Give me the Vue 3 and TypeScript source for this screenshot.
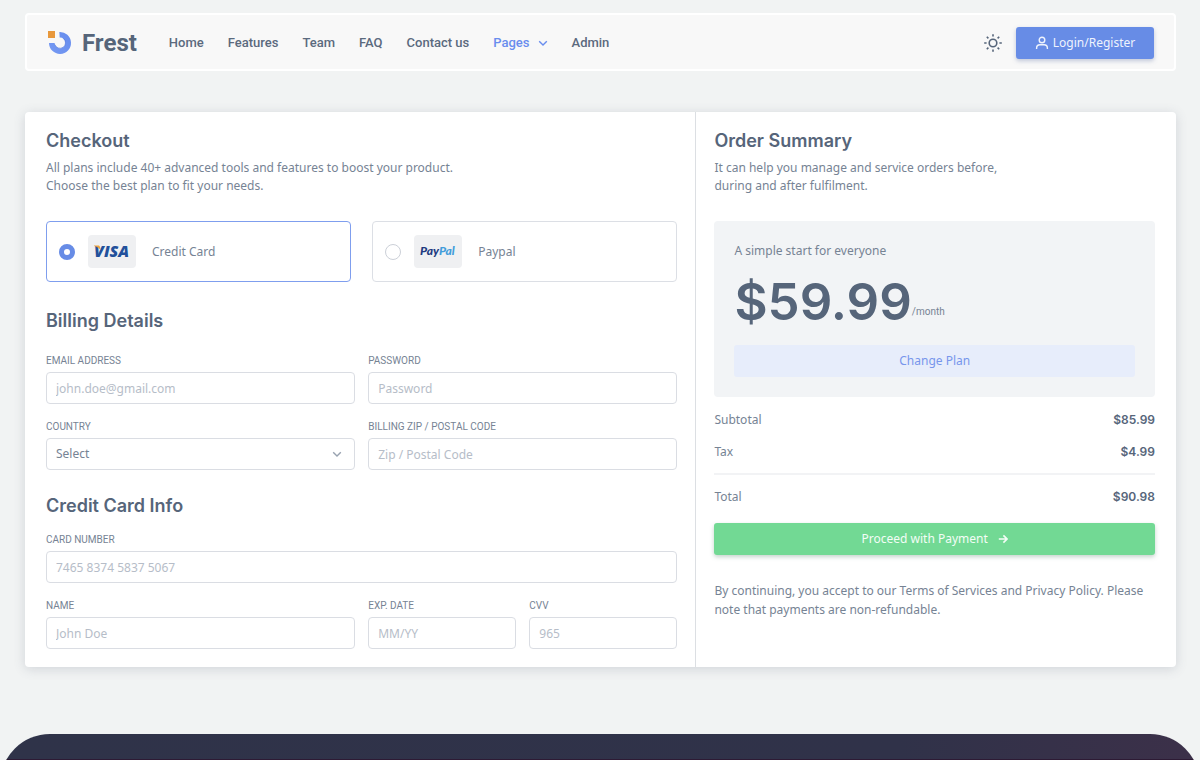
<script setup lang="ts">
import { ref } from 'vue'

interface NavItem {
  label: string
  active?: boolean
}

interface Field {
  id: string
  label: string
  placeholder: string
  type: string
  span: 1 | 2 | 4
}

const navItems: NavItem[] = [
  { label: 'Home' },
  { label: 'Features' },
  { label: 'Team' },
  { label: 'FAQ' },
  { label: 'Contact us' },
  { label: 'Pages', active: true },
  { label: 'Admin' },
]

const cardFields: Field[] = [
  { id: 'card-number', label: 'Card number', placeholder: '7465 8374 5837 5067', type: 'text', span: 4 },
  { id: 'card-name', label: 'Name', placeholder: 'John Doe', type: 'text', span: 2 },
  { id: 'card-expiry', label: 'Exp. date', placeholder: 'MM/YY', type: 'text', span: 1 },
  { id: 'card-cvv', label: 'CVV', placeholder: '965', type: 'text', span: 1 },
]

const method = ref<'card' | 'paypal'>('card')
const country = ref('')
</script>

<template>
  <div class="page">
    <header class="navbar">
      <a class="brand" href="#">
        <svg class="brand-mark" viewBox="0 0 24 24" aria-hidden="true">
          <defs>
            <linearGradient id="arc" x1="0" y1="1" x2="1" y2="0">
              <stop offset="0" stop-color="#7498f2" />
              <stop offset="1" stop-color="#688eee" />
            </linearGradient>
          </defs>
          <path d="M11.500 3.800A8.200 8.200 0 1 1 3.800 12" stroke="url(#arc)" stroke-width="5.600" />
          <path d="M15.500 7.500A5.500 5.500 0 1 1 6.800 13.500" stroke="#4f74da" stroke-width="1" opacity="0.600" />
          <rect x="0" y="0" width="7" height="7" fill="#e8983c" />
        </svg>
        <span>Frest</span>
      </a>
      <nav class="nav">
        <a v-for="item in navItems" :key="item.label" href="#" :class="{ active: item.active }">
          {{ item.label }}
          <svg v-if="item.active" class="chevron" viewBox="0 0 10 10" aria-hidden="true">
            <path d="M1.200 3.200 5 7l3.800-3.800" />
          </svg>
        </a>
      </nav>
      <button class="theme" type="button" aria-label="Toggle theme">
        <svg viewBox="0 0 20 20" aria-hidden="true">
          <circle cx="10" cy="10" r="3.8" />
          <path d="M10 1.2v2.400M10 16.400v2.400M1.200 10h2.400M16.400 10h2.400M3.800 3.800l1.600 1.600M14.600 14.600l1.600 1.600M3.800 16.200l1.600-1.600M14.600 5.400l1.600-1.600" />
        </svg>
      </button>
      <button class="login" type="button">
        <svg viewBox="0 0 14 14" aria-hidden="true">
          <circle cx="7" cy="4" r="2.8" />
          <path d="M1.600 13v-.8c0-2 1.600-3.400 3.400-3.400h4c1.800 0 3.400 1.400 3.400 3.400v.8" />
        </svg>
        Login/Register
      </button>
    </header>

    <main class="card">
      <form class="checkout" @submit.prevent>
        <h2>Checkout</h2>
        <p class="lead">
          All plans include 40+ advanced tools and features to boost your product.<br />
          Choose the best plan to fit your needs.
        </p>

        <div class="methods">
          <label class="method" :class="{ selected: method === 'card' }">
            <input v-model="method" type="radio" name="method" value="card" />
            <span class="logo">
              <svg viewBox="0 0 48 33" aria-hidden="true">
                <text class="visa" x="6" y="22">VISA</text>
                <path d="M6 10.500h4.200c1.200 0 1.600.600 1.800 1.600l.6 3C11 13 8.800 11.500 6 10.900Z" fill="#eba43f" />
              </svg>
            </span>
            <span>Credit Card</span>
          </label>
          <label class="method" :class="{ selected: method === 'paypal' }">
            <input v-model="method" type="radio" name="method" value="paypal" />
            <span class="logo">
              <svg viewBox="0 0 48 33" aria-hidden="true">
                <text class="paypal" x="6" y="20">Pay<tspan class="pal">Pal</tspan></text>
              </svg>
            </span>
            <span>Paypal</span>
          </label>
        </div>

        <h2 class="billing-title">Billing Details</h2>
        <div class="fields">
          <div class="field span-2">
            <label for="email">Email address</label>
            <input id="email" type="email" placeholder="john.doe@gmail.com" />
          </div>
          <div class="field span-2">
            <label for="password">Password</label>
            <input id="password" type="password" placeholder="Password" />
          </div>
          <div class="field span-2">
            <label for="country">Country</label>
            <div class="select">
              <select id="country" v-model="country">
                <option value="">Select</option>
                <option value="au">Australia</option>
                <option value="ca">Canada</option>
                <option value="uk">United Kingdom</option>
              </select>
              <svg class="chevron" viewBox="0 0 10 10" aria-hidden="true">
                <path d="M1.200 3.200 5 7l3.800-3.800" />
              </svg>
            </div>
          </div>
          <div class="field span-2">
            <label for="zip">Billing zip / postal code</label>
            <input id="zip" type="text" placeholder="Zip / Postal Code" />
          </div>
        </div>

        <h2 class="card-title">Credit Card Info</h2>
        <div class="fields card-fields">
          <div v-for="field in cardFields" :key="field.id" class="field" :class="`span-${field.span}`">
            <label :for="field.id">{{ field.label }}</label>
            <input :id="field.id" :type="field.type" :placeholder="field.placeholder" />
          </div>
        </div>
      </form>

      <section class="summary">
        <h2>Order Summary</h2>
        <p class="lead">
          It can help you manage and service orders before,<br />
          during and after fulfilment.
        </p>

        <div class="plan">
          <p>A simple start for everyone</p>
          <div class="price"><strong>$59.99</strong><span>/month</span></div>
          <button class="change" type="button">Change Plan</button>
        </div>

        <dl class="totals">
          <div><dt>Subtotal</dt><dd>$85.99</dd></div>
          <div><dt>Tax</dt><dd>$4.99</dd></div>
          <div class="total"><dt>Total</dt><dd>$90.98</dd></div>
        </dl>

        <button class="pay" type="button">
          Proceed with Payment
          <svg viewBox="0 0 10 10" aria-hidden="true">
            <path d="M.8 5h8M5.400 1.400 9 5 5.400 8.600" />
          </svg>
        </button>

        <p class="terms">
          By continuing, you accept to our Terms of Services and Privacy Policy. Please
          note that payments are non-refundable.
        </p>
      </section>
    </main>

    <footer class="footer">
      <div class="footer-panel"></div>
    </footer>
  </div>
</template>

<style>
body {
  margin: 0;
  background: #f1f3f3;
}
</style>

<style scoped>
.page {
  box-sizing: border-box;
  min-height: 100vh;
  display: flex;
  flex-direction: column;
  padding-top: 13px;
  font-family: "Noto Sans", "Liberation Sans", sans-serif;
  font-size: 12px;
  line-height: 18px;
  color: #768394;
}

.page *,
.page *::before {
  box-sizing: border-box;
}

button,
input,
select {
  font: inherit;
  color: inherit;
}

button {
  border: 0;
  padding: 0;
  cursor: pointer;
}

a {
  color: inherit;
  text-decoration: none;
}

svg {
  display: block;
  fill: none;
}

p,
h2,
dl,
dd {
  margin: 0;
}

.navbar {
  display: flex;
  align-items: center;
  height: 58px;
  margin: 0 24px 0 25px;
  padding: 1px 20px 0 21px;
  border: 2px solid #fff;
  border-radius: 4px;
  background: #f8f8f8;
}

.brand {
  display: flex;
  align-items: center;
  gap: 10px;
  margin-right: 32px;
  font-family: Roboto, sans-serif;
  font-size: 24px;
  line-height: 28px;
  font-weight: 700;
  color: #56657a;
}

.brand-mark {
  width: 24px;
  height: 24px;
}

.nav {
  display: flex;
  flex: 1;
  gap: 24px;
  font-family: Roboto, sans-serif;
  font-size: 13px;
  font-weight: 500;
  color: #5b6a7e;
}

.nav a {
  display: flex;
  align-items: center;
  gap: 8px;
}

.nav .active {
  color: #698dee;
}

.chevron {
  width: 10px;
  height: 10px;
  stroke: currentColor;
  stroke-width: 1.4;
}

.theme {
  margin-right: 13px;
  background: none;
  color: #56657a;
}

.theme svg {
  width: 20px;
  height: 20px;
  stroke: currentColor;
  stroke-width: 1.6;
}

.login {
  display: flex;
  align-items: center;
  justify-content: center;
  gap: 4px;
  width: 138px;
  height: 32px;
  border-radius: 3px;
  background: #678ce6;
  box-shadow: 0 2px 4px rgba(90, 110, 160, 0.35);
  color: #eef3fd;
}

.login svg {
  width: 14px;
  height: 14px;
  stroke: currentColor;
  stroke-width: 1.4;
}

.card {
  display: grid;
  grid-template-columns: 7fr 5fr;
  margin: 41px 24px 67px 25px;
  border-radius: 4px;
  background: #fff;
  box-shadow: 0 2px 12px rgba(80, 90, 115, 0.2);
}

.checkout {
  padding: 17px 18px 18px 21px;
  border-right: 1px solid #dcdfe3;
}

.summary {
  padding: 17px 21px 18px 18px;
}

h2 {
  font-family: Inter, sans-serif;
  font-size: 18px;
  line-height: 24px;
  font-weight: 600;
  color: #56657a;
}

.lead {
  margin-top: 6px;
}

.methods {
  display: grid;
  grid-template-columns: 1fr 1fr;
  gap: 21px;
  margin-top: 26px;
}

.method {
  display: flex;
  align-items: center;
  height: 61px;
  padding: 0 12px;
  border: 1px solid #dcdfe5;
  border-radius: 4px;
}

.method.selected {
  border-color: #7f9eee;
}

.method input {
  appearance: none;
  width: 16px;
  height: 16px;
  margin: 0;
  border: 1px solid #ccd0d8;
  border-radius: 50%;
  background: #fff;
}

.method input:checked {
  border: 5px solid #678ce6;
}

.logo {
  width: 48px;
  height: 33px;
  margin: 0 16px 0 13px;
  border-radius: 4px;
  background: #eff0f2;
}

.visa {
  font: italic 900 16px "Open Sans", sans-serif;
  fill: #22509b;
}

.paypal {
  font: italic 900 12px Lato, sans-serif;
  fill: #213a80;
}

.pal {
  fill: #429ddb;
}

.billing-title {
  margin-top: 27px;
}

.card-title {
  margin-top: 24px;
}

.fields {
  display: grid;
  grid-template-columns: repeat(4, 1fr);
  gap: 16px 13px;
  margin-top: 21px;
}

.card-fields {
  margin-top: 15px;
}

.span-2 {
  grid-column: span 2;
}

.span-4 {
  grid-column: span 4;
}

.field label {
  display: block;
  margin-bottom: 4px;
  font-family: Roboto, sans-serif;
  font-size: 10px;
  line-height: 14px;
  text-transform: uppercase;
}

.field input,
.field select {
  display: block;
  width: 100%;
  height: 32px;
  padding: 0 9px;
  border: 1px solid #dadde3;
  border-radius: 4px;
  background: #fff;
  outline: 0;
}

.field select {
  appearance: none;
}

.field input::placeholder {
  color: #b6bdc8;
  opacity: 1;
}

.select {
  display: grid;
  align-items: center;
}

.select select,
.select .chevron {
  grid-area: 1 / 1;
}

.select .chevron {
  justify-self: end;
  margin-right: 13px;
  color: #98a2b0;
  pointer-events: none;
}

.plan {
  margin-top: 26px;
  padding: 21px 20px 20px;
  border-radius: 4px;
  background: #f2f4f6;
}

.price {
  display: flex;
  align-items: flex-end;
  margin: 12px 0 13px;
}

.price strong {
  font-family: Inter, sans-serif;
  font-size: 51px;
  line-height: 60px;
  font-weight: 600;
  color: #56657a;
}

.price span {
  margin-bottom: 13px;
  font-family: Roboto, sans-serif;
  font-size: 10px;
  line-height: 14px;
}

.change,
.pay {
  width: 100%;
  height: 32px;
  border-radius: 3px;
}

.change {
  display: block;
  background: #e7edfb;
  color: #7796ec;
}

.totals {
  margin: 7px 0 10px;
}

.totals div {
  display: flex;
  align-items: center;
  justify-content: space-between;
  height: 32px;
}

.totals .total {
  height: 40px;
  margin-top: 5px;
  padding-top: 6px;
  border-top: 2px solid #f2f3f5;
}

dd {
  font-family: Inter, sans-serif;
  font-size: 12px;
  font-weight: 600;
  color: #56657a;
}

.pay {
  display: flex;
  align-items: center;
  justify-content: center;
  gap: 10px;
  background: #72d994;
  box-shadow: 0 2px 4px rgba(90, 130, 110, 0.35);
  color: #f3fdf6;
}

.pay svg {
  width: 10px;
  height: 10px;
  stroke: currentColor;
  stroke-width: 1.6;
}

.terms {
  margin-top: 26px;
  line-height: 19px;
}

.footer {
  display: grid;
  flex: 1 0 26px;
  height: 26px;
  overflow: hidden;
}

.footer-panel {
  min-height: 100px;
  border-radius: 50px 50px 0 0;
  background:
    linear-gradient(transparent 25px, #2d1a34 25px),
    linear-gradient(90deg, #2f3349 0%, #303249 75%, #3c3049 100%);
}
</style>
